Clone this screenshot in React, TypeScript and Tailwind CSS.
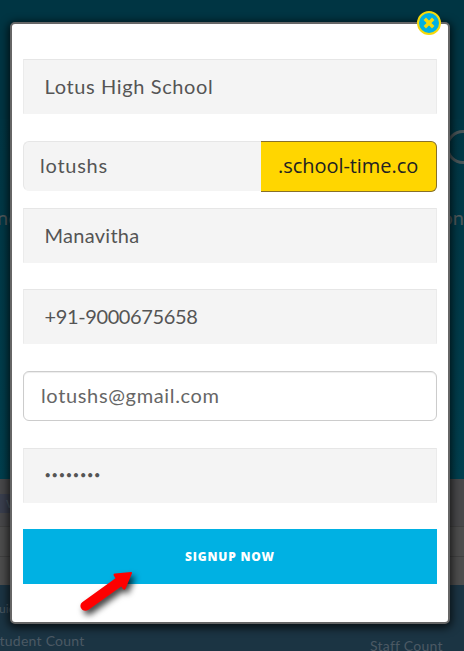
import { useState } from "react";

const inputClass =
  "block h-[55px] w-full border border-[#e6e6e6] border-x-[#ebebeb] border-b-[#f4f4f4] bg-[#f4f4f4] px-[20.5px] pb-[2px] text-[#555] outline-none";

const Backdrop = () => (
  <div className="absolute inset-0 flex flex-col overflow-hidden whitespace-nowrap font-['Lato',sans-serif] text-[#4b5964]">
    <div className="h-[119px] shrink-0 bg-[#003543]" />
    <div className="h-[360px] shrink-0 bg-linear-to-b from-[#003644] to-[#003f4e] pt-[11px] text-[#4f585b]">
      <div className="ml-[446px] h-[34px] w-[34px] rounded-full border-[3px] border-[#4a5558]" />
      <div className="-ml-[3px] mt-[39px] flex h-7 items-center text-[20px]">
        <span className="w-[450px]">nd</span>
        <span>ion</span>
      </div>
    </div>
    <div className="h-[48px] shrink-0 border-b border-[#414141] bg-[#48484a] pt-[15px]">
      <div className="h-[19px] w-[20px] bg-[#3a3f4e] pl-[6px] text-[12px] leading-[19px]">W</div>
    </div>
    <div className="h-[30px] shrink-0 border-b border-[#414141] bg-[#4d4d4d]" />
    <div className="h-[28px] shrink-0 bg-[#4d4d4d]" />
    <div className="flex-1 bg-[#1b3443] pt-[15px]">
      <p className="-ml-px text-[12px] leading-[18px]">uick</p>
      <div className="-ml-[8px] mt-[13px] flex items-start text-[14px] leading-5 tracking-[0.25px]">
        <span className="w-[378px]">Student Count</span>
        <span className="pt-[5px]">Staff Count</span>
      </div>
    </div>
  </div>
);

const CloseButton = () => (
  <button
    type="button"
    aria-label="Close"
    className="absolute right-[7px] -top-[13px] h-6 w-6 rounded-full border-2 border-[#f5d90a] bg-[#00b1e3]"
  >
    <svg viewBox="0 0 20 20" className="h-5 w-5">
      <path d="M7 7l6 6M13 7l-6 6" stroke="#f5d90a" strokeWidth="3.4" strokeLinecap="square" />
      <path d="M10 4.6v2.2M10 13.2v2.2M4.6 10h2.2M13.2 10h2.2" stroke="#00b1e3" strokeWidth="1.2" />
    </svg>
  </button>
);

const Arrow = () => (
  <svg
    width="80"
    height="64"
    viewBox="0 0 80 64"
    className="pointer-events-none absolute left-[70px] top-[560px] drop-shadow-[3px_4px_3px_rgba(0,0,0,0.75)]"
  >
    <path
      d="M12.2 42.2L45.5 18.2L43.7 15.5Q43 13.7 45 13.5L61.2 12.1Q62.4 12.2 61.9 13.6L55.4 29Q54.3 30.6 53 29L51.2 26.4L18.2 50C15 51.5 11.8 50.3 10.7 47.4Q9.7 44.2 12.2 42.2Z"
      fill="#fe0000"
    />
  </svg>
);

const App = () => {
  const [form, setForm] = useState({
    school: "Lotus High School",
    domain: "lotushs",
    name: "Manavitha",
    phone: "+91-9000675658",
    email: "lotushs@gmail.com",
    password: "password",
  });

  const update = (key: keyof typeof form) => (e: React.ChangeEvent<HTMLInputElement>) =>
    setForm({ ...form, [key]: e.target.value });

  return (
    <main className="relative h-[651px] w-[464px] overflow-hidden">
      <Backdrop />
      <div className="relative pl-[10px] pt-[22px]">
        <form className="relative flex h-[602px] w-[440px] flex-col rounded-[5px] border-2 border-[#666] bg-white px-[11px] pt-[35px] font-['Lato',sans-serif] text-[20px] shadow-[0_2px_8px_2px_rgba(0,0,0,0.7)]">
          <CloseButton />
          <input
            aria-label="School"
            className={`${inputClass} tracking-[0.62px]`}
            value={form.school}
            onChange={update("school")}
          />
          <div className="mt-[27px] flex h-[51px]">
            <input
              aria-label="Domain"
              className="h-[50px] w-[238px] rounded-l-[6px] border border-r-0 border-[#e6e6e6] border-b-[#f4f4f4] bg-[#f4f4f4] px-4 pb-[2px] tracking-[0.75px] text-[#555] outline-none"
              value={form.domain}
              onChange={update("domain")}
            />
            <span className="flex flex-1 items-center rounded-r-[6px] border border-l-0 border-[#87702a] bg-[#ffd600] pb-[2px] pl-[17px] font-['Open_Sans',sans-serif] text-[20px] tracking-[-0.05px] text-[#222]">
              .school-time.co
            </span>
          </div>
          <input
            aria-label="Name"
            className={`${inputClass} mt-4 tracking-[0.28px]`}
            value={form.name}
            onChange={update("name")}
          />
          <input
            aria-label="Phone"
            className={`${inputClass} mt-[26px] tracking-[-0.38px]`}
            value={form.phone}
            onChange={update("phone")}
          />
          <input
            aria-label="Email"
            className="mt-[27px] block h-[50px] w-full rounded-[6px] border border-[#ccc] px-[17px] pb-[2px] tracking-[0.65px] text-[#666] shadow-[inset_0_1px_1px_rgba(0,0,0,0.075)] outline-none"
            value={form.email}
            onChange={update("email")}
          />
          <input
            aria-label="Password"
            type="password"
            className={`${inputClass} mt-[27px] text-[11px] tracking-[0.7px]`}
            value={form.password}
            onChange={update("password")}
          />
          <button
            type="button"
            className="mt-[26px] block h-[55px] w-full bg-[#00b1e3] font-['Open_Sans',sans-serif] text-[12px] font-extrabold tracking-[0.8px] text-white"
          >
            SIGNUP NOW
          </button>
        </form>
      </div>
      <Arrow />
    </main>
  );
};

export default App;
